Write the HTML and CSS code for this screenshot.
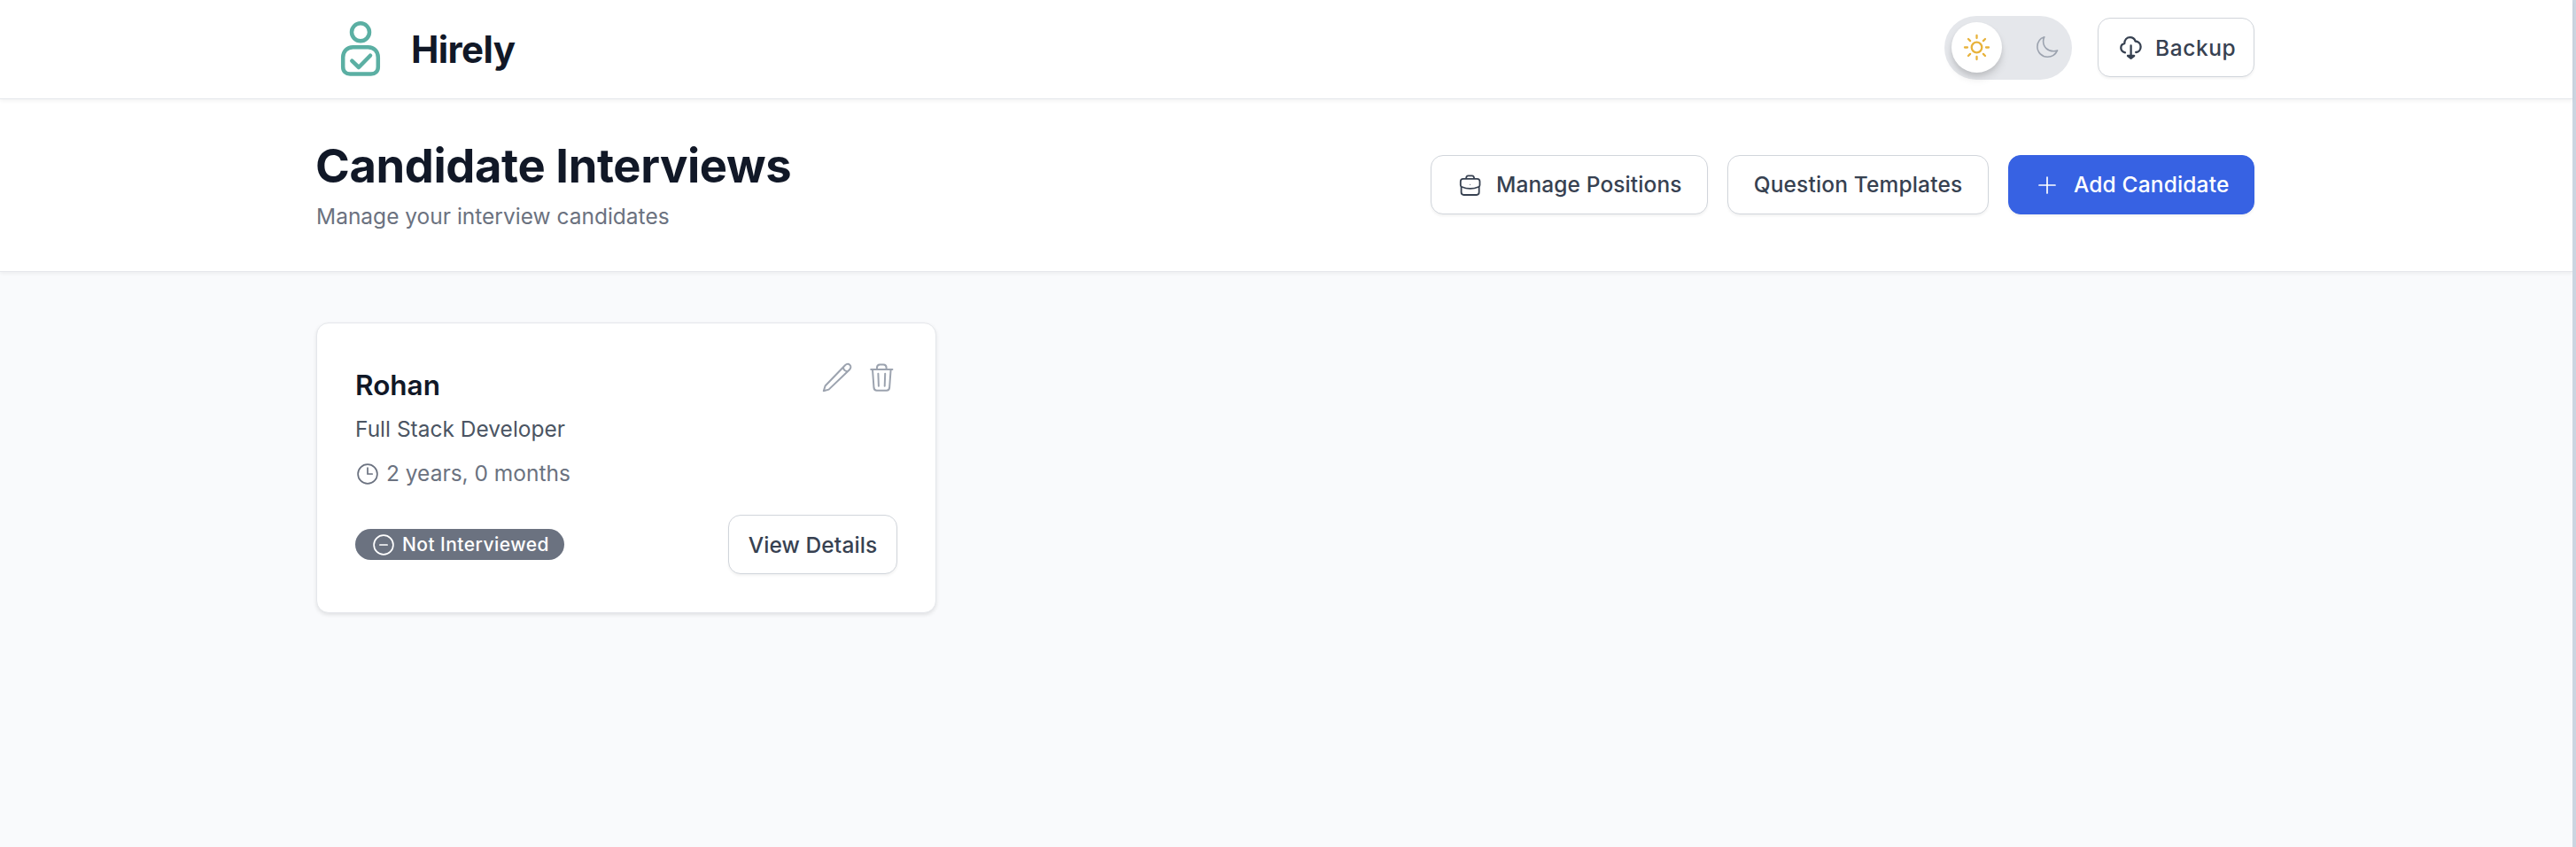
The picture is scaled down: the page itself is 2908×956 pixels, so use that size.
FILE: index.html
```
<!DOCTYPE html>
<html lang="en">
<head>
<meta charset="utf-8">
<title>Hirely</title>
<link rel="stylesheet" href="styles.css">
</head>
<body>
<div class="page">
  <header class="topbar">
    <div class="container topbar-inner">
      <div class="brand">
        <svg class="brand-logo" width="48" height="72" viewBox="0 0 48 72" fill="none" stroke="#5bafa3" stroke-width="4.500" stroke-linecap="round" stroke-linejoin="round"><circle cx="24" cy="19.300" r="10"/><path d="M15.500 36.200h17c6.800 0 11.300 5 11.300 11.500v10.800c0 5-3.300 8-8 8H12.200c-4.700 0-8-3-8-8V47.700c0-6.500 4.500-11.500 11.300-11.500Z"/><path d="m14.300 51.700 7.700 7.300 13-13.300"/></svg>
        <span class="brand-name">Hirely</span>
      </div>
      <div class="topbar-actions">
        <div class="toggle">
          <span class="knob"><svg width="32" height="32" viewBox="0 0 32 32" fill="none" stroke="#e8b33c" stroke-width="2.300" stroke-linecap="round"><circle cx="15.500" cy="15.500" r="5.800"/><path d="M15.500 2v3M15.500 26v3M2 15.500h3M26 15.500h3M6 6l2.100 2.100M22.900 22.900l2.100 2.100M6 25l2.100-2.100M22.900 8.100l2.100-2.100"/></svg></span>
          <svg width="28" height="28" viewBox="0 0 28 28" fill="none" stroke="#9ca3af" stroke-width="1.600" stroke-linejoin="round"><path d="M10.800 1.800C6 3.500 2.900 7.700 2.900 12.800c0 6.300 5.100 11.400 11.400 11.400 5 0 9.300-2.900 11.300-7.300-1.400.5-2.900.8-4.500.8-6.500 0-11.500-4.600-11.500-11.200 0-1.700.4-3.300 1.200-4.700Z"/></svg>
        </div>
        <button class="btn btn-backup"><svg width="28" height="28" viewBox="0 0 28 28" fill="none" stroke="#374151" stroke-width="2.300" stroke-linecap="round" stroke-linejoin="round"><path d="M8 19.300C4.800 18.500 3.300 16.600 3.300 14c0-2.600 1.600-4.300 3.900-4.800C7.400 5 10 2.200 13.600 2.200c3 0 5 1.500 6 4.300 3.700.2 6 3.100 6 6.300 0 3.200-2 6-5.400 6.200M14.600 11.500V24"/><path d="M11 23l3.600 2.800 3.600-2.800z" fill="#374151"/></svg><span class="t-backup">Backup</span></button>
      </div>
    </div>
  </header>
  <section class="heading">
    <div class="container heading-inner">
      <div class="heading-text">
        <h1>Candidate Interviews</h1>
        <p>Manage your interview candidates</p>
      </div>
      <div class="heading-actions">
        <button class="btn btn-positions"><svg width="28" height="28" viewBox="0 0 28 28" fill="none" stroke="#374151" stroke-width="1.800" stroke-linecap="round" stroke-linejoin="round"><path d="M6.800 6.800h15.700c1.900 0 3 1.200 3 3v4.200c0 1-.5 1.600-1.500 2-5.500 2.300-13.200 2.300-18.700 0-1-.4-1.500-1-1.500-2V9.800c0-1.800 1.100-3 3-3ZM4.600 15.800v6.300c0 1.900.9 2.900 2.800 2.900h14.500c1.900 0 2.800-1 2.800-2.900v-6.300M10 6.500c.2-2.200.8-3.200 2.400-3.200h4.400c1.600 0 2.200 1 2.400 3.200"/><circle cx="14.600" cy="13.300" r=".5" fill="#374151" stroke="none"/></svg><span class="t-pos">Manage Positions</span></button>
        <button class="btn btn-templates"><span class="t-tpl">Question Templates</span></button>
        <button class="btn btn-add"><svg width="28" height="28" viewBox="0 0 28 28" fill="none" stroke="#fff" stroke-width="1.700" stroke-linecap="round"><path d="M14 5v18M5 14h18"/></svg><span class="t-add">Add Candidate</span></button>
      </div>
    </div>
  </section>
  <main class="container content">
    <article class="card">
      <div class="card-top">
        <div class="card-info">
          <h2>Rohan</h2>
          <p class="role">Full Stack Developer</p>
          <p class="exp"><svg width="28" height="28" viewBox="0 0 28 28" fill="none" stroke="#6b7280" stroke-width="1.700" stroke-linecap="round"><circle cx="14" cy="14" r="10.900"/><path d="M14 7v7h5.200"/></svg><span class="t-exp">2 years, 0 months</span></p>
        </div>
        <div class="card-tools">
          <svg width="36" height="36" viewBox="0 0 36 36" fill="none" stroke="#9ca3af" stroke-width="2" stroke-linecap="round" stroke-linejoin="round"><path d="M2.800 33.200 4.600 27.500 27 4.300c1.800-1.700 4-1.700 5.400-.4 1.400 1.400 1.300 3.600-.4 5.300L8.600 31.600ZM24.900 6.500c.3 2.600 1.900 4.400 4.900 4.800"/></svg>
          <svg width="36" height="36" viewBox="0 0 36 36" fill="none" stroke="#9ca3af" stroke-width="2" stroke-linecap="round" stroke-linejoin="round"><path d="M6.200 9h24.200M8 9.200l1.500 20.500c.2 2 1.200 3 3.200 3h11.200c2 0 3-1 3.200-3L28.600 9.200M13 8.700V7c0-2.300 1-3.500 3.300-3.500h4C22.600 3.500 23.600 4.700 23.600 7v1.700M14.400 13.800l.5 14M22.200 13.800l-.5 14"/></svg>
        </div>
      </div>
      <div class="card-bottom">
        <span class="badge"><svg width="28" height="28" viewBox="0 0 28 28" fill="none" stroke="#fff" stroke-width="1.700" stroke-linecap="round"><circle cx="14" cy="14" r="10.900"/><path d="M9.900 14h8.200"/></svg><span class="t-badge">Not Interviewed</span></span>
        <button class="btn btn-view"><span class="t-view">View Details</span></button>
      </div>
    </article>
  </main>
</div>
<div class="scrollbar"></div>
</body>
</html>
```
FILE: styles.css
```
* { box-sizing: border-box; }
body { margin: 0; display: flex; height: 956px; overflow: hidden; background: #f9fafc; font-family: Inter, "Liberation Sans", sans-serif; color: #111827; }
h1, h2, p { margin: 0; }
svg { display: block; flex: none; }
.page { flex: 1; display: flex; flex-direction: column; }
.scrollbar { width: 4px; background: #cbd5e1; }
.container { width: 2188px; margin-left: 357px; }
.topbar { position: relative; flex: none; height: 112px; background: #fff; border-bottom: 1px solid #e5e7eb; box-shadow: 0 2px 4px rgba(0,0,0,.05); }
.topbar-inner { display: flex; justify-content: space-between; height: 108px; }
.brand { display: flex; align-items: center; gap: 33px; padding-left: 26px; }
.brand-logo { margin-top: 17px; align-self: flex-start; }
.brand-name { font-size: 42px; font-weight: 700; line-height: 50px; padding-top: 3px; letter-spacing: -.6px; }
.topbar-actions { display: flex; align-items: center; gap: 29px; }
.toggle { display: flex; align-items: center; justify-content: space-between; width: 144px; height: 72px; padding: 0 14px 0 8px; border-radius: 36px; background: #e5e7eb; }
.knob { display: flex; align-items: center; justify-content: center; width: 57px; height: 57px; border-radius: 50%; background: #fff; box-shadow: 0 7px 10px rgba(0,0,0,.1), 0 3px 5px rgba(0,0,0,.08); margin-bottom: 1px; }
.btn { display: flex; align-items: center; height: 67px; padding: 0; border: 1px solid #d1d5db; border-radius: 14px; background: #fff; box-shadow: 0 2px 3px rgba(0,0,0,.05); color: #374151; font: 500 24.500px/35px Inter, "Liberation Sans", sans-serif; letter-spacing: .1px; white-space: nowrap; }
.btn-backup { width: 177px; padding-left: 22px; gap: 14px; letter-spacing: .6px; margin-bottom: 1px; }
.t-backup, .t-view { padding-top: 2px; }
.heading { flex: none; height: 195px; background: #fff; border-bottom: 1px solid #e5e7eb; box-shadow: 0 2px 4px rgba(0,0,0,.05); }
.heading-inner { display: flex; justify-content: space-between; align-items: center; height: 193px; }
h1 { font-size: 52.500px; font-weight: 700; line-height: 63px; letter-spacing: -.4px; margin-left: -1px; }
.heading-text p { font-size: 24.500px; line-height: 35px; margin-top: 8px; color: #6b7280; }
.heading-actions { display: flex; gap: 22px; }
.btn-positions { width: 313px; padding-left: 29px; gap: 16px; }
.btn-templates { width: 295px; justify-content: center; letter-spacing: .15px; }
.btn-add { width: 278px; padding-left: 29px; gap: 16px; background: #3762e3; border-color: #3762e3; color: #fff; letter-spacing: .15px; }
.content { padding-top: 57px; }
.card { display: flex; flex-direction: column; justify-content: space-between; width: 700px; height: 328px; padding: 43px; border: 1px solid #e5e7eb; border-radius: 14px; background: #fff; box-shadow: 0 2px 4px rgba(0,0,0,.1); }
.card-top, .card-bottom { display: flex; justify-content: space-between; }
h2 { font-size: 31.500px; font-weight: 600; line-height: 49px; padding-top: 2px; }
.role { font-size: 24.500px; line-height: 35px; margin-top: 8px; color: #4b5563; }
.exp { display: flex; align-items: center; gap: 7px; font-size: 24.500px; line-height: 35px; margin-top: 15px; color: #6b7280; }
.card-tools { display: flex; gap: 14px; }
.card-bottom { align-items: center; }
.badge { display: flex; align-items: center; gap: 7px; width: 236px; height: 35px; padding-left: 18px; border-radius: 18px; background: #6b7280; color: #fff; font-size: 21px; font-weight: 500; letter-spacing: .45px; white-space: nowrap; }
.btn-view { width: 191px; justify-content: center; }
```
